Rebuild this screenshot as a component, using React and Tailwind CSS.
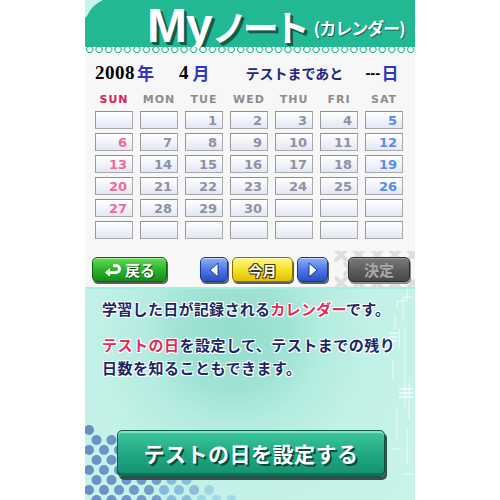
import React from 'react';

const jp = "font-['Noto_Sans_CJK_JP',sans-serif]";
const days = ['SUN', 'MON', 'TUE', 'WED', 'THU', 'FRI', 'SAT'];
const cells = Array.from({ length: 42 }, (_, i) => {
  const d = i - 1;
  return d >= 1 && d <= 30 ? d : null;
});

function Dots() {
  const dots = [];
  for (let r = 0; r < 8; r++) {
    const y = 6 + r * 10;
    const limit = 14 + r * 19;
    for (let c = 0; c < 11; c++) {
      const x = 4 + c * 15 + (r % 2 ? 7.5 : 0);
      if (x > limit) continue;
      const t = x / 160;
      const col = t < 0.45 ? '#5f83c0' : t < 0.7 ? '#74a8d6' : '#8ccbe3';
      dots.push(<circle key={r + '-' + c} cx={x} cy={y} r="5" fill={col} opacity={0.9 - t * 0.3} />);
    }
  }
  return (
    <svg className="absolute left-0 bottom-0" width="160" height="76" viewBox="0 0 160 76">
      {dots}
    </svg>
  );
}

function Circuit() {
  return (
    <svg className="absolute right-0 top-0" width="30" height="200" viewBox="0 0 30 200" fill="none" stroke="#ffffff" strokeWidth="1" opacity="0.8">
      <path d="M22 0 V12 H12 V20 M28 8 H18 V30 M10 26 V40 M14 40 V60 M20 38 V120 M8 70 V90 M24 95 V130 M12 120 V150 M22 140 V175 M6 160 H14 M18 185 H28" />
      <path d="M4 44 H12 M4 48 H12 M4 52 H12 M14 100 H28 M14 104 H28 M14 108 H28" strokeWidth="1.5" />
    </svg>
  );
}

function Crosses() {
  const xs = [];
  for (let c = 0; c < 5; c++) {
    for (let r = 0; r < 3; r++) {
      const x = 8 + c * 18 + (r % 2 ? 9 : 0);
      const y = 4 + r * 14;
      xs.push(<path key={c + '-' + r} d={`M${x - 5} ${y - 5} L${x + 5} ${y + 5} M${x + 5} ${y - 5} L${x - 5} ${y + 5}`} />);
    }
  }
  return (
    <svg className="absolute right-0 top-[-6px]" width="82" height="40" viewBox="0 0 82 40" stroke="#dedede" strokeWidth="4" strokeLinecap="round">
      {xs}
    </svg>
  );
}

const outline = '[text-shadow:1px_1px_0_#fff,-1px_-1px_0_#fff,1px_-1px_0_#fff,-1px_1px_0_#fff,0_1px_0_#fff,0_-1px_0_#fff]';

export default function App() {
  return (
    <div className="w-[500px] h-[500px] bg-white flex justify-center">
      <div className="w-[330px] h-[500px] flex flex-col">
        {/* header */}
        <div className="h-[47px] bg-[#22b893] relative flex items-start">
          <svg className="absolute left-0 top-0" width="20" height="18" viewBox="0 0 20 18">
            <path d="M0 0 H18 Q7 5 2 16 L0 18 Z" fill="#c9f3ea" />
          </svg>
          <div className="relative flex items-end ml-[62px]">
            <span className="font-['Liberation_Sans',sans-serif] font-bold text-[48px] leading-[52px] text-white tracking-[-1px] [text-shadow:2px_2px_0_#0f5f4c,3px_3px_0_#0f5f4c]">
              My
            </span>
            <span className={`${jp} font-bold text-[36px] leading-[52px] text-white tracking-[-5px] [text-shadow:2px_2px_0_#0f5f4c,3px_3px_0_#0f5f4c]`}>
              ノート
            </span>
            <span className={`${jp} font-bold text-[17px] leading-[24px] text-white ml-[9px] mb-[12px] tracking-[-1px] [text-shadow:1px_1px_0_#0f5f4c]`}>
              (カレンダー)
            </span>
          </div>
        </div>
        <div className="relative h-[6px] bg-[#f7f7f7] bg-[radial-gradient(circle,#ffffff_2.2px,#22b893_2.8px,#22b893_3.4px,transparent_3.6px)] bg-[length:9.45px_7px] bg-[position:0_-1px]" />

        {/* calendar */}
        <div className="relative bg-[#f7f7f7] h-[234px] flex flex-col pl-[10px]">
          <div className={`mt-[9px] h-[22px] flex items-center ${jp} font-bold`}>
            <span className="font-['Liberation_Serif',serif] text-[19px] text-black tracking-[0.5px]">2008</span>
            <span className="text-[17px] text-[#3434c4] ml-[2px]">年</span>
            <span className="font-['Liberation_Serif',serif] text-[19px] text-black ml-[25px]">4</span>
            <span className="text-[17px] text-[#3434c4] ml-[4px]">月</span>
            <span className="text-[14px] text-[#1f2a7c] ml-[36px]">テストまであと</span>
            <span className="font-['Liberation_Sans',sans-serif] text-[15px] text-black ml-[22px]">---</span>
            <span className="text-[17px] text-[#3434c4] ml-[1px]">日</span>
          </div>
          <div className="mt-[9px] h-[14px] w-[308px] grid grid-cols-7 gap-x-[7px]">
            {days.map((d, i) => (
              <span
                key={d}
                className={`text-center font-['DejaVu_Sans',sans-serif] font-bold text-[11px] leading-[14px] tracking-[1px] ${i === 0 ? 'text-[#d6245e]' : 'text-[#8d8d8d]'}`}
              >
                {d}
              </span>
            ))}
          </div>
          <div className="mt-[4px] w-[308px] grid grid-cols-7 gap-x-[7px] gap-y-[4px]">
            {cells.map((d, i) => {
              const col = i % 7;
              const color = col === 0 ? 'text-[#ee6b96]' : col === 6 ? 'text-[#5a8ce6]' : 'text-[#9092a2]';
              return (
                <div
                  key={i}
                  className="h-[18px] border border-[#a9a9a9] border-t-[#8f8f8f] border-l-[#9a9a9a] bg-gradient-to-b from-white to-[#e2e7f4] flex items-center justify-end pr-[5px]"
                >
                  {d && (
                    <span className={`font-['DejaVu_Sans',sans-serif] font-bold text-[13px] leading-none ${color}`}>{d}</span>
                  )}
                </div>
              );
            })}
          </div>

          {/* buttons */}
          <div className="relative mt-[18px] h-[25px] flex items-center pr-[5px]">
            <Crosses />
            <button className="relative ml-[-3px] w-[75px] h-[25px] rounded-[5px] border border-[#0d5f14] bg-gradient-to-b from-[#5fdc52] via-[#2cb42c] to-[#168d1b] shadow-[inset_0_1px_0_#a8f09c,1px_2px_0_#5d5d5d] flex items-center justify-center gap-[4px]">
              <svg width="17" height="13" viewBox="0 0 17 13" fill="none">
                <path d="M9 2.5 H12 A3.5 3.5 0 0 1 12 9.5 H4" stroke="#fff" strokeWidth="3" />
                <path d="M1 9.5 L6 5 V14 Z" fill="#fff" />
              </svg>
              <span className={`${jp} font-bold text-[15px] leading-none text-white [text-shadow:1px_1px_0_#0b4f10]`}>戻る</span>
            </button>
            <button className="relative ml-[33px] w-[28px] h-[25px] rounded-[5px] border border-[#1c3690] bg-gradient-to-b from-[#8eb0fa] via-[#4f78e4] to-[#2a4fc4] shadow-[inset_0_1px_0_#c4d6ff,1px_2px_0_#5d5d5d] flex items-center justify-center">
              <svg width="12" height="16" viewBox="0 0 12 16">
                <path d="M10 1 L2 8 L10 15 Z" fill="#fff" stroke="#1c3690" strokeWidth="1" />
              </svg>
            </button>
            <button className="relative ml-[4px] w-[61px] h-[25px] rounded-[5px] border border-[#8a7400] bg-gradient-to-b from-[#fff77a] via-[#f6e22a] to-[#dcc000] shadow-[inset_0_1px_0_#fffbc4,1px_2px_0_#5d5d5d] flex items-center justify-center">
              <span className={`${jp} font-bold text-[14px] leading-none text-white [text-shadow:1px_1px_0_#4a3a00,-1px_-1px_0_#4a3a00,1px_-1px_0_#4a3a00,-1px_1px_0_#4a3a00]`}>今月</span>
            </button>
            <button className="relative ml-[4px] w-[31px] h-[25px] rounded-[5px] border border-[#1c3690] bg-gradient-to-b from-[#8eb0fa] via-[#4f78e4] to-[#2a4fc4] shadow-[inset_0_1px_0_#c4d6ff,1px_2px_0_#5d5d5d] flex items-center justify-center">
              <svg width="12" height="16" viewBox="0 0 12 16">
                <path d="M2 1 L10 8 L2 15 Z" fill="#fff" stroke="#1c3690" strokeWidth="1" />
              </svg>
            </button>
            <button className="relative ml-auto w-[62px] h-[25px] rounded-[5px] border border-[#2e2e2e] bg-gradient-to-b from-[#7a7a7a] via-[#5e5e5e] to-[#484848] shadow-[inset_0_1px_0_#9a9a9a,1px_2px_0_#8d8d8d] flex items-center justify-center">
              <span className={`${jp} font-bold text-[15px] leading-none text-[#a9a9a9]`}>決定</span>
            </button>
          </div>
        </div>

        {/* info panel */}
        <div className="relative overflow-hidden flex-1 border-t-[2px] border-[#a6efe2] bg-[radial-gradient(circle_at_45%_22%,#93ddcc_0px,#9fe3d4_55px,#b4ece0_90px,#c2f1e7_140px,#c7f3ea_220px)] flex flex-col px-[17px] pt-[10px]">
          <Dots />
          <Circuit />
          <p className={`relative h-[20px] ${jp} font-bold text-[15px] leading-[20px] text-[#1b2866] ${outline} tracking-[0.3px] whitespace-nowrap`}>
            学習した日が記録される<span className="text-[#e02c5a]">カレンダー</span>です。
          </p>
          <p className={`relative mt-[14px] ${jp} font-bold text-[15px] leading-[23px] text-[#1b2866] ${outline} tracking-[0.5px] whitespace-nowrap`}>
            <span className="text-[#e02c5a]">テストの日</span>を設定して、テストまでの残り
            <br />
            日数を知ることもできます。
          </p>
          <button className="relative mt-[51px] ml-[15px] w-[268px] h-[47px] rounded-[5px] border border-[#0d5a46] bg-gradient-to-b from-[#3fc89f] via-[#1fa882] to-[#16906f] shadow-[inset_0_2px_0_#7ee2c3,inset_0_-3px_0_#0f7058,2px_3px_0_#3e4a48] flex items-center justify-center">
            <span className={`${jp} font-bold text-[21px] leading-none text-white tracking-[0.5px] [text-shadow:2px_2px_0_#0b4a3a]`}>
              テストの日を設定する
            </span>
          </button>
        </div>
      </div>
    </div>
  );
}
